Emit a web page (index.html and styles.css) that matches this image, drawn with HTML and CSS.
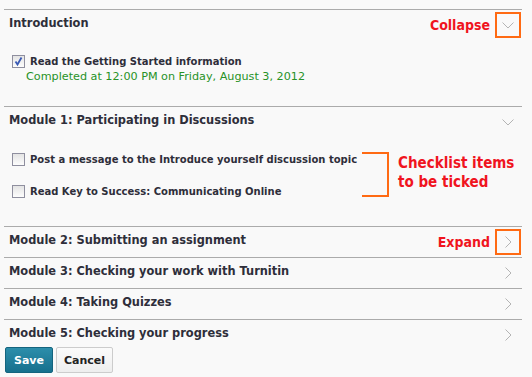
FILE: index.html
```html
<!DOCTYPE html>
<html lang="en">
<head>
    <meta charset="UTF-8">
    <title>Checklist</title>
    <link rel="stylesheet" href="styles.css">
</head>
<body>
    <div class="checklist">
        <div class="module">
            <div class="module-head">
                <div class="module-title">Introduction</div>
                <span class="note">Collapse</span>
                <div class="toggle marked">
                    <svg width="12" height="7" viewBox="0 0 12 7"><path d="M0.5 0.5 L6 6 L11.5 0.5" fill="none" stroke="#b4b4b4" stroke-width="1"/></svg>
                </div>
            </div>
            <div class="module-body intro-body">
                <div class="item">
                    <span class="box">
                        <svg width="11" height="11" viewBox="0 0 11 11"><path d="M2.5 5.5 L4.5 8.5 L8.5 1.5" fill="none" stroke="#3b5bb5" stroke-width="1.8"/></svg>
                    </span>
                    <span class="item-text">Read the Getting Started information</span>
                </div>
                <div class="done">Completed at 12:00 PM on Friday, August 3, 2012</div>
            </div>
        </div>

        <div class="module">
            <div class="module-head">
                <div class="module-title">Module 1: Participating in Discussions</div>
                <div class="toggle">
                    <svg width="12" height="7" viewBox="0 0 12 7"><path d="M0.5 0.5 L6 6 L11.5 0.5" fill="none" stroke="#b4b4b4" stroke-width="1"/></svg>
                </div>
            </div>
            <div class="module-body tick-body">
                <div class="items">
                    <div class="item">
                        <span class="box"></span>
                        <span class="item-text">Post a message to the Introduce yourself discussion topic</span>
                    </div>
                    <div class="item">
                        <span class="box"></span>
                        <span class="item-text">Read Key to Success: Communicating Online</span>
                    </div>
                </div>
                <div class="bracket"></div>
                <div class="note note-block">Checklist items<br>to be ticked</div>
            </div>
        </div>

        <div class="module">
            <div class="module-head">
                <div class="module-title">Module 2: Submitting an assignment</div>
                <span class="note">Expand</span>
                <div class="toggle marked">
                    <svg width="7" height="12" viewBox="0 0 7 12"><path d="M0.5 0.5 L6 6 L0.5 11.5" fill="none" stroke="#b4b4b4" stroke-width="1"/></svg>
                </div>
            </div>
        </div>

        <div class="module">
            <div class="module-head">
                <div class="module-title">Module 3: Checking your work with Turnitin</div>
                <div class="toggle">
                    <svg width="7" height="12" viewBox="0 0 7 12"><path d="M0.5 0.5 L6 6 L0.5 11.5" fill="none" stroke="#b4b4b4" stroke-width="1"/></svg>
                </div>
            </div>
        </div>

        <div class="module">
            <div class="module-head">
                <div class="module-title">Module 4: Taking Quizzes</div>
                <div class="toggle">
                    <svg width="7" height="12" viewBox="0 0 7 12"><path d="M0.5 0.5 L6 6 L0.5 11.5" fill="none" stroke="#b4b4b4" stroke-width="1"/></svg>
                </div>
            </div>
        </div>

        <div class="module">
            <div class="module-head">
                <div class="module-title">Module 5: Checking your progress</div>
                <div class="toggle">
                    <svg width="7" height="12" viewBox="0 0 7 12"><path d="M0.5 0.5 L6 6 L0.5 11.5" fill="none" stroke="#b4b4b4" stroke-width="1"/></svg>
                </div>
            </div>
        </div>
    </div>

    <div class="actions">
        <button class="btn btn-save">Save</button>
        <button class="btn btn-cancel">Cancel</button>
    </div>
</body>
</html>
```

FILE: styles.css
```css
* { box-sizing: border-box; margin: 0; padding: 0; }
body {
    font-family: 'DejaVu Sans', Verdana, sans-serif;
    background-color: #f9f9f9;
    color: #2e2e3a;
    width: 532px;
    height: 377px;
    overflow: hidden;
    padding-top: 9px;
}
.checklist { margin-left: 4px; width: 518px; }
.module { border-top: 1px solid #ababab; }
.module-head {
    display: flex; align-items: center; height: 30px;
    padding-left: 5px;
}
.module-title { font-size: 11.4px; font-weight: bold; flex: 1; margin-top: -5px; }
.toggle {
    width: 26px; height: 26px; margin-right: 1px;
    display: flex; justify-content: center; align-items: center;
    border: 2px solid transparent;
}
.toggle.marked { border-color: #ff6a13; }
.note {
    font-family: 'DejaVu Sans Condensed', 'DejaVu Sans', sans-serif;
    font-weight: bold; font-size: 14px; color: #f0141e;
    margin-right: 5px;
}
.intro-body { padding: 15px 0 28px 8px; height: 66px; }
.item { display: flex; align-items: center; gap: 5px; white-space: nowrap; }
.item-text { font-size: 10px; font-weight: bold; }
.box {
    width: 13px; height: 13px; border: 1px solid #8f8f9f; flex: none;
    background: linear-gradient(#e4e4e4, #fdfdfd);
    display: flex; justify-content: center; align-items: center;
}
.done { font-size: 11.2px; color: #279227; padding-left: 14px; margin-top: 2px; }
.tick-body {
    display: flex; align-items: center; height: 89px; padding: 0 0 13px 8px;
}
.items { display: flex; flex-direction: column; gap: 19px; width: 350px; }
.bracket {
    width: 27px; height: 45px;
    border: 2px solid #ff6a13; border-left: none;
    margin-top: -1px;
}
.note-block { margin-left: 9px; line-height: 19px; font-size: 15px; margin-top: -4px; }
.actions { display: flex; gap: 3px; padding-left: 5px; margin-top: -3px; }
.btn {
    font-family: 'DejaVu Sans', Verdana, sans-serif;
    font-size: 11px; font-weight: bold; height: 26px; border-radius: 2px;
}
.btn-save {
    width: 48px; color: #ffffff;
    background: linear-gradient(#2c8eab, #17708d);
    border: 1px solid #14647e;
}
.btn-cancel {
    width: 57px; color: #222;
    background: linear-gradient(#fbfbfb, #eeeeee);
    border: 1px solid #cccccc;
}
```
